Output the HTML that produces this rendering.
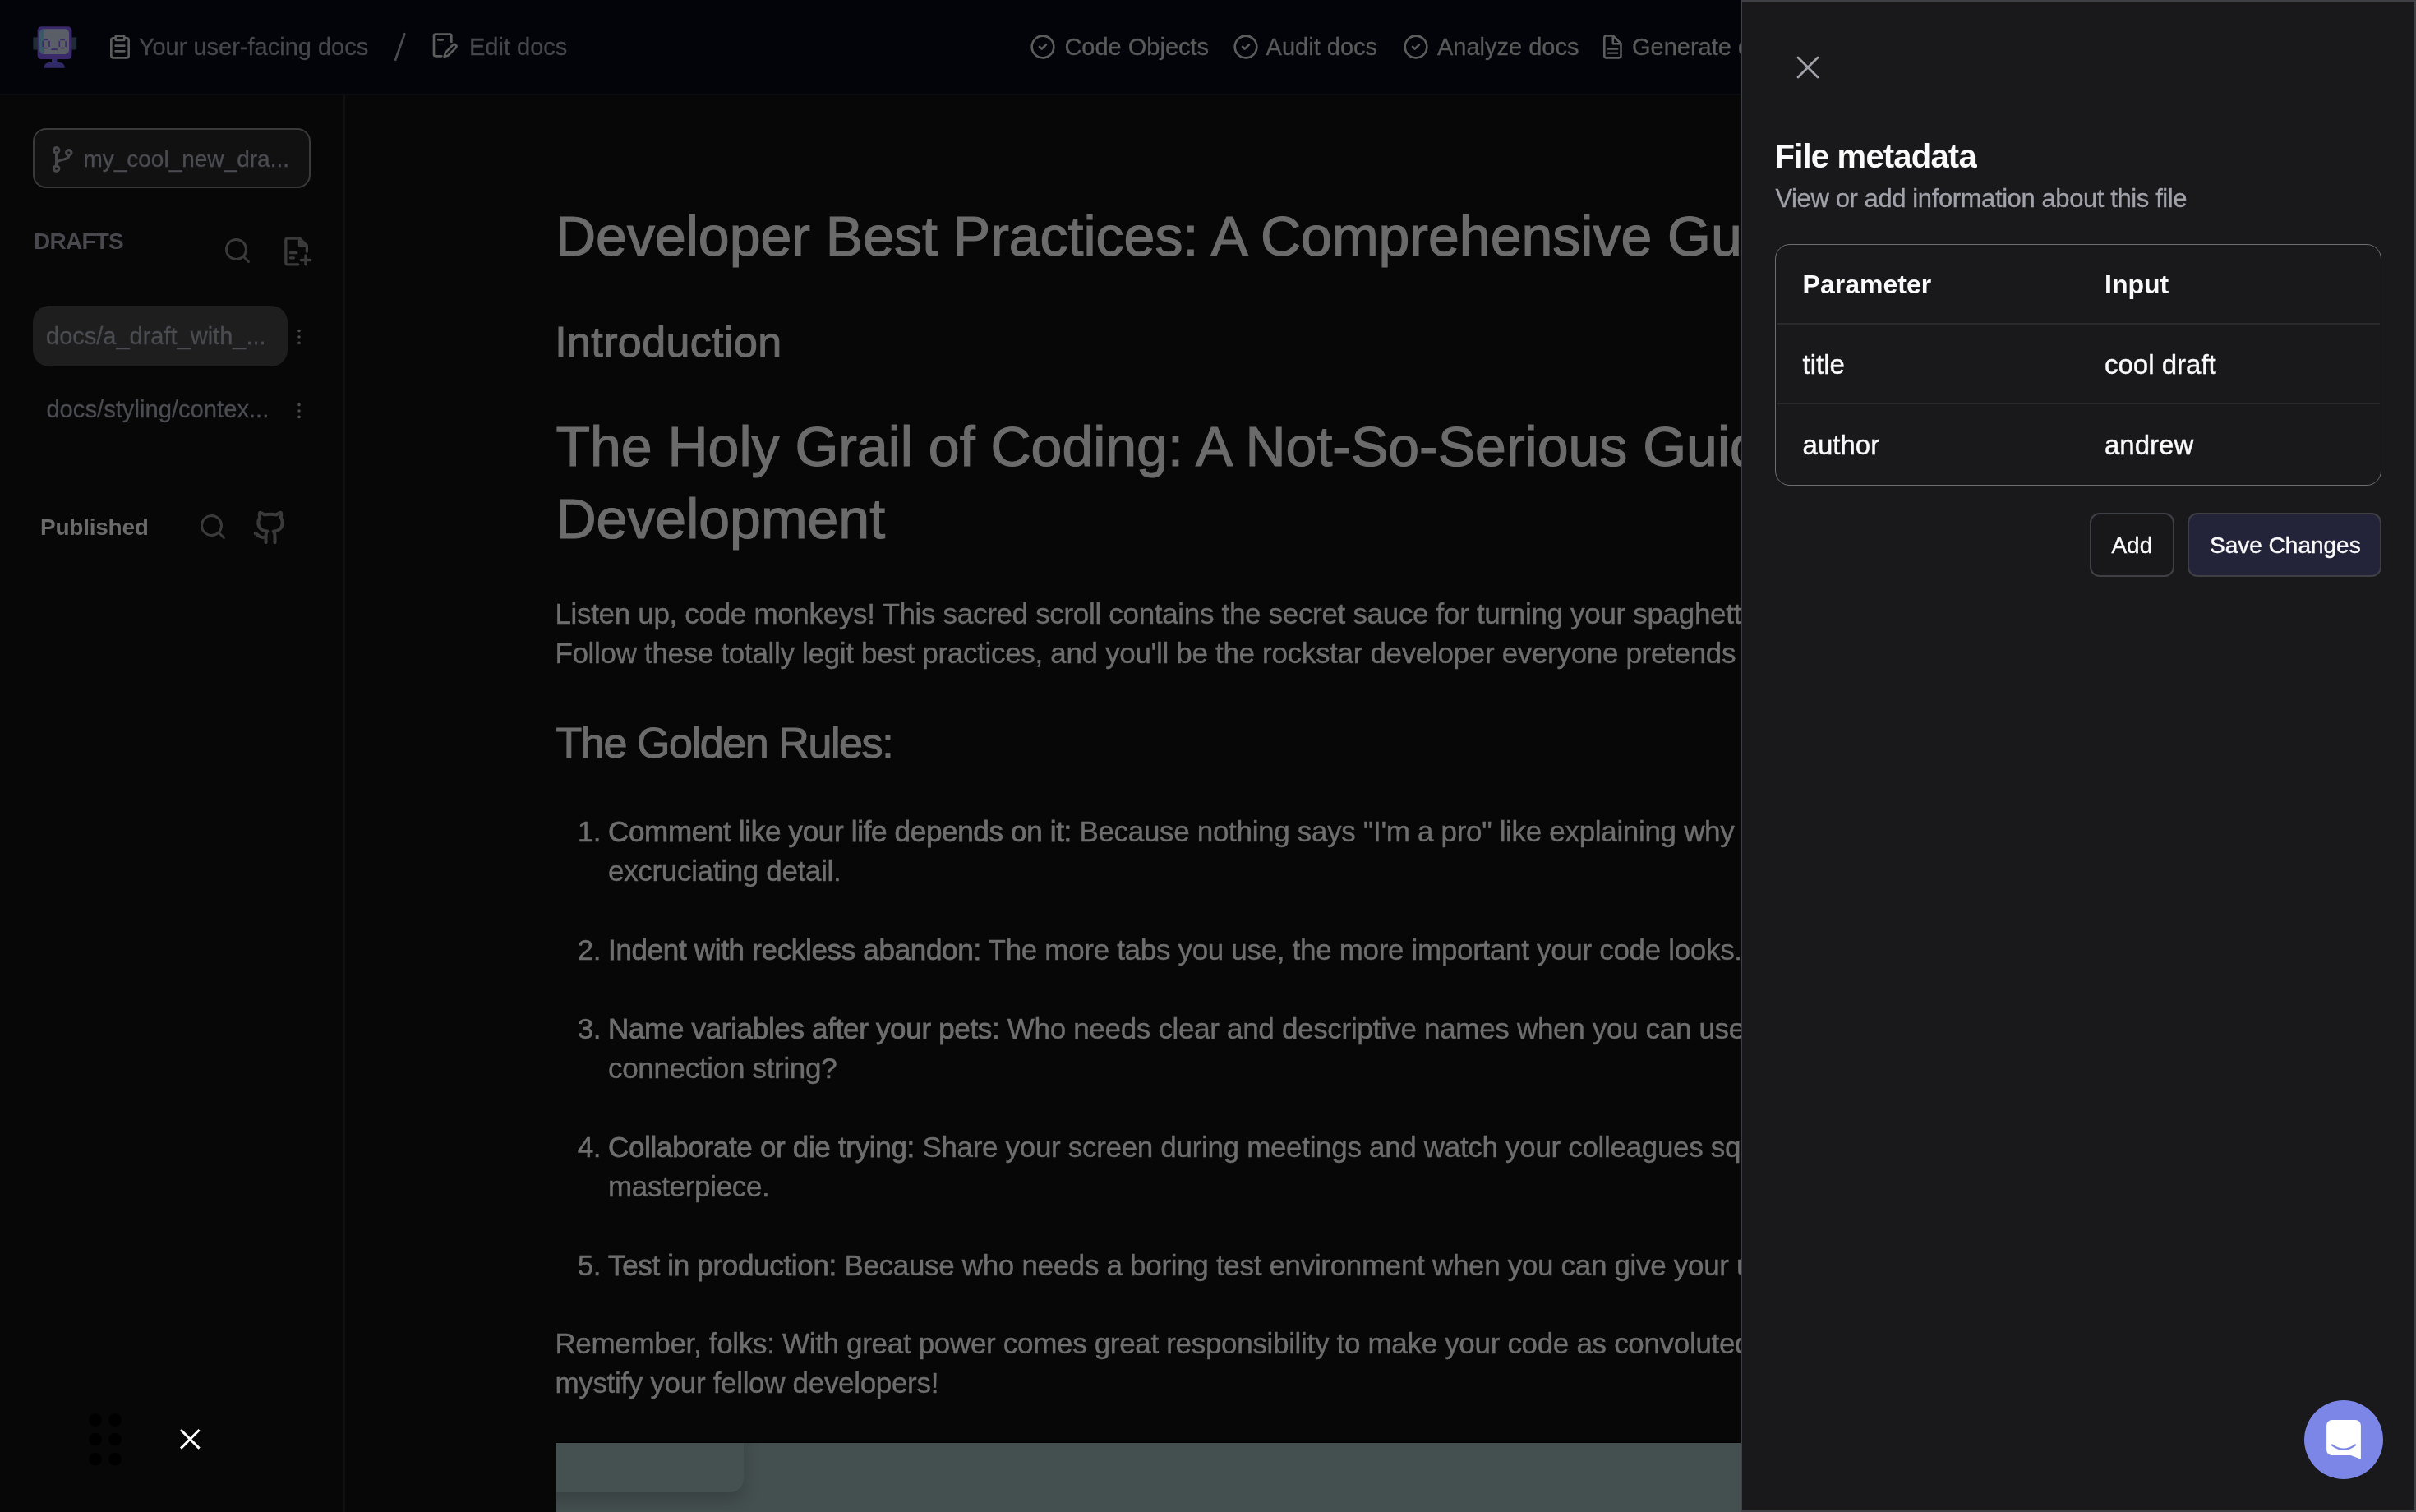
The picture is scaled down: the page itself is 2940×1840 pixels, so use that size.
<!DOCTYPE html>
<html><head><meta charset="utf-8">
<style>
html,body{margin:0;padding:0;background:#070707;overflow:hidden;}
body{width:2940px;height:1840px;}
#root{position:relative;will-change:transform;width:1470px;height:920px;zoom:2;overflow:hidden;background:#070707;font-family:"Liberation Sans",sans-serif;}
.a{position:absolute;white-space:nowrap;line-height:1;}
svg{position:absolute;overflow:visible;}
@media (max-width:2000px){body{width:1470px;height:920px;}#root{zoom:1;}}
#hdr{position:absolute;left:0;top:0;width:1470px;height:57px;background:#03040a;border-bottom:1px solid #0c0d12;}
.ht{font-size:14.5px;color:#46474c;top:21.63px;-webkit-text-stroke:0.15px #46474c;}
.hr{color:#5a5a5a;-webkit-text-stroke:0.15px #5a5a5a;}
#side{position:absolute;left:0;top:58px;width:209px;height:862px;border-right:1px solid #101010;background:#070707;}
.mc{color:#6b6b6b;}
.h1{font-size:34px;-webkit-text-stroke:0.6px #6b6b6b;}
.h2{font-size:26px;-webkit-text-stroke:0.5px #6b6b6b;}
.p{font-size:17.5px;line-height:24px;letter-spacing:-0.16px;color:#6e6e6e;-webkit-text-stroke:0.2px #6e6e6e;}
.b{-webkit-text-stroke:0.38px #6e6e6e;}
#sheet{position:absolute;left:1059px;top:0;width:409px;height:918px;background:#19191c;border:1px solid #3f3f46;}
</style></head><body><div id="root">

<!-- HEADER -->
<div id="hdr"></div>
<!-- logo -->
<svg style="left:20px;top:16px" width="27" height="26" viewBox="40 32 54 52">
  <rect x="40.3" y="45.4" width="6" height="15.1" fill="#1f2c36"/>
  <rect x="87" y="45.4" width="6.2" height="15.1" fill="#1f2c36"/>
  <path d="M53.3 82.7 Q54 76 60 76 L72 76 Q78.7 76 78.7 82.7 Z" fill="#302a68"/>
  <rect x="63" y="71" width="6.4" height="6" fill="#302a68"/>
  <rect x="45.6" y="32.2" width="41.8" height="39.9" rx="5" fill="#3a2a6a"/>
  <rect x="48.25" y="35.3" width="35.75" height="30.7" rx="5" fill="#5a5e66"/>
  <path d="M53 35.3 h0 a5 5 0 0 0 -4.75 5 v20.7 a5 5 0 0 0 4.75 5 z" fill="#3a5868"/>
  <g fill="#3a2a6a"><rect x="53.3" y="47.8" width="5.5" height="1.4"/><rect x="53.3" y="57.8" width="5.5" height="1.4"/><rect x="51.4" y="49.9" width="1.6" height="7.2"/><rect x="59.2" y="49.9" width="1.6" height="7.2"/>
  <rect x="73.4" y="47.8" width="5.5" height="1.4"/><rect x="73.4" y="57.8" width="5.5" height="1.4"/><rect x="71.5" y="49.9" width="1.6" height="7.2"/><rect x="79.3" y="49.9" width="1.6" height="7.2"/></g>
  <rect x="62.3" y="59.2" width="7.7" height="1.8" fill="#3a2a6a"/>
</svg>
<!-- clipboard icon -->
<svg style="left:65px;top:20.7px" width="16" height="16" viewBox="0 0 24 24" fill="none" stroke="#5c5c5c" stroke-width="2" stroke-linecap="round" stroke-linejoin="round">
  <rect width="8" height="4" x="8" y="2" rx="1" ry="1"/><path d="M16 4h2a2 2 0 0 1 2 2v14a2 2 0 0 1-2 2H6a2 2 0 0 1-2-2V6a2 2 0 0 1 2-2h2"/><path d="M8 11h8"/><path d="M8 16h8"/>
</svg>
<div class="a ht" style="left:84.4px;">Your user-facing docs</div>
<svg style="left:240px;top:20px" width="7" height="17" viewBox="0 0 7 17"><line x1="6.2" y1="0.6" x2="0.6" y2="16.4" stroke="#4b4c52" stroke-width="1.3" stroke-linecap="round"/></svg>
<!-- edit icon -->
<svg style="left:262px;top:19.5px" width="16" height="16" viewBox="0 0 24 24" fill="none" stroke="#5c5c5c" stroke-width="2" stroke-linecap="round" stroke-linejoin="round">
  <path d="M10 22H4.5a1.5 1.5 0 0 1-1.5-1.5V3.5A1.5 1.5 0 0 1 4.5 2h13A1.5 1.5 0 0 1 19 3.5V9"/><path d="M7 7h4"/><path d="M20.2 11.8a1.9 1.9 0 0 1 2.7 2.7L16 21.4l-3.5 1 1-3.5z"/>
</svg>
<div class="a ht" style="left:285.5px;">Edit docs</div>

<!-- right nav -->
<svg style="left:626.3px;top:20.4px" width="16" height="16" viewBox="0 0 24 24" fill="none" stroke="#5c5c5c" stroke-width="2" stroke-linecap="round" stroke-linejoin="round"><circle cx="12" cy="12" r="10"/><path d="m9 12 2 2 4-4"/></svg>
<div class="a ht hr" style="left:647.7px;">Code Objects</div>
<svg style="left:750.1px;top:20.4px" width="16" height="16" viewBox="0 0 24 24" fill="none" stroke="#5c5c5c" stroke-width="2" stroke-linecap="round" stroke-linejoin="round"><circle cx="12" cy="12" r="10"/><path d="m9 12 2 2 4-4"/></svg>
<div class="a ht hr" style="left:770.3px;">Audit docs</div>
<svg style="left:853.6px;top:20.4px" width="16" height="16" viewBox="0 0 24 24" fill="none" stroke="#5c5c5c" stroke-width="2" stroke-linecap="round" stroke-linejoin="round"><circle cx="12" cy="12" r="10"/><path d="m9 12 2 2 4-4"/></svg>
<div class="a ht hr" style="left:874.5px;">Analyze docs</div>
<svg style="left:973px;top:19px" width="16" height="18" viewBox="973 19 16 18" fill="none" stroke="#5c5c5c" stroke-width="1.3" stroke-linecap="round" stroke-linejoin="round"><path d="M981.5 21.75H977.35A1.2 1.2 0 0 0 976.15 22.95V34A1.2 1.2 0 0 0 977.35 35.2H985.05A1.2 1.2 0 0 0 986.25 34V26.5Z"/><path d="M981.4 21.9V26.6H986.1"/><path d="M978.4 29.85H984.2M978.4 32.3H984.2" stroke-width="1.1"/></svg>
<div class="a ht hr" style="left:993px;">Generate docs</div>

<!-- SIDEBAR -->
<div id="side"></div>
<div style="position:absolute;left:20px;top:78px;width:167px;height:34.5px;border:1px solid #3a3a3a;border-radius:8px;background:#111111;"></div>
<svg style="left:29px;top:87.5px" width="18" height="18" viewBox="0 0 18 18" fill="none" stroke="#47474b" stroke-width="1.6" stroke-linecap="round">
  <circle cx="5.3" cy="3.9" r="1.6"/><circle cx="5.3" cy="15.1" r="1.6"/><circle cx="12.9" cy="5.4" r="1.6"/>
  <path d="M5.3 5.5v8"/><path d="M5.3 12.2c0.3-2.2 3.2-2.4 4.6-2.7c2-0.4 2.9-1.4 3-2.5"/>
</svg>
<div class="a" style="left:50.7px;top:89.75px;font-size:14px;color:#4b4c52;-webkit-text-stroke:0.15px #4b4c52;">my_cool_new_dra...</div>

<div class="a" style="left:20.5px;top:139.75px;font-size:14px;font-weight:700;color:#48484e;letter-spacing:-0.38px;">DRAFTS</div>
<svg style="left:135.55px;top:143.5px" width="18" height="18" viewBox="0 0 24 24" fill="none" stroke="#3a3a3a" stroke-width="2" stroke-linecap="round" stroke-linejoin="round"><circle cx="11" cy="11" r="8"/><path d="m21 21-4.3-4.3"/></svg>
<svg style="left:171px;top:143px" width="20" height="20" viewBox="0 0 24 24" fill="none" stroke="#3a3a3a" stroke-width="2" stroke-linecap="round" stroke-linejoin="round">
  <path d="M12.5 21.5H4.7a1.2 1.2 0 0 1-1.2-1.2V3.7a1.2 1.2 0 0 1 1.2-1.2h8.8l5.3 5.3v4.2"/><path d="M13.5 2.5v5.3h5.3z" fill="#3a3a3a"/><path d="M6.8 13h4.5"/><path d="M6.8 16.7h2.5"/><path d="M18 15v6.5"/><path d="M14.7 18.3h6.6"/>
</svg>

<div style="position:absolute;left:20px;top:186px;width:155px;height:37px;border-radius:10px;background:#1e1e1e;"></div>
<div class="a" style="left:28px;top:197.3px;font-size:14.5px;color:#4b4c52;-webkit-text-stroke:0.15px #4b4c52;">docs/a_draft_with_...</div>
<svg style="left:180px;top:199px" width="4" height="12" viewBox="0 0 4 12" fill="#4b4c52"><circle cx="2" cy="2.3" r="0.9"/><circle cx="2" cy="6" r="0.9"/><circle cx="2" cy="9.7" r="0.9"/></svg>
<div class="a" style="left:28.2px;top:242px;font-size:14.6px;color:#4b4c52;-webkit-text-stroke:0.15px #4b4c52;">docs/styling/contex...</div>
<svg style="left:180px;top:244px" width="4" height="12" viewBox="0 0 4 12" fill="#4b4c52"><circle cx="2" cy="2.3" r="0.9"/><circle cx="2" cy="6" r="0.9"/><circle cx="2" cy="9.7" r="0.9"/></svg>

<div class="a" style="left:24.5px;top:314.15px;font-size:14px;font-weight:700;color:#6a6a6a;letter-spacing:-0.12px;">Published</div>
<svg style="left:120.55px;top:311.65px" width="18" height="18" viewBox="0 0 24 24" fill="none" stroke="#3a3a3a" stroke-width="2" stroke-linecap="round" stroke-linejoin="round"><circle cx="11" cy="11" r="8"/><path d="m21 21-4.3-4.3"/></svg>
<svg style="left:153.3px;top:310px" width="22" height="22" viewBox="0 0 24 24" fill="none" stroke="#3a3a3a" stroke-width="2.2" stroke-linecap="round" stroke-linejoin="round"><path d="M15 22v-4a4.8 4.8 0 0 0-1-3.5c3 0 6-2 6-5.5.08-1.25-.27-2.48-1-3.5.28-1.15.28-2.35 0-3.5 0 0-1 0-3 1.5-2.64-.5-5.36-.5-8 0C6 2 5 2 5 2c-.3 1.15-.3 2.35 0 3.5A5.403 5.403 0 0 0 4 9c0 3.5 3 5.5 6 5.5-.39.49-.68 1.05-.85 1.65-.17.6-.22 1.23-.15 1.85v4"/><path d="M9 18c-4.51 2-5-2-7-2"/></svg>

<!-- MAIN CONTENT -->
<div class="a mc h1" style="left:338px;top:126.7px;">Developer Best Practices: A Comprehensive Guide</div>
<div class="a mc h2" style="left:337.6px;top:195.0px;letter-spacing:0.19px;">Introduction</div>
<div class="a mc h1" style="left:338.2px;top:249.6px;line-height:44px;">The Holy Grail of Coding: A Not-So-Serious Guide to<br>Development</div>
<div class="a mc p" style="left:337.7px;top:361.44px;">Listen up, code monkeys! This sacred scroll contains the secret sauce for turning your spaghetti code<br>Follow these totally legit best practices, and you'll be the rockstar developer everyone pretends to be.</div>
<div class="a mc h2" style="left:338.25px;top:438.9px;letter-spacing:-0.7px;">The Golden Rules:</div>

<div class="a mc p" style="left:351.35px;top:493.9px;">1.</div>
<div class="a mc p" style="left:370px;top:493.9px;"><span class="b">Comment like your life depends on it:</span> Because nothing says "I'm a pro" like explaining why your code<br>excruciating detail.</div>
<div class="a mc p" style="left:351.35px;top:565.8px;">2.</div>
<div class="a mc p" style="left:370px;top:565.8px;"><span class="b">Indent with reckless abandon:</span> The more tabs you use, the more important your code looks.</div>
<div class="a mc p" style="left:351.35px;top:613.8px;">3.</div>
<div class="a mc p" style="left:370px;top:613.8px;"><span class="b">Name variables after your pets:</span> Who needs clear and descriptive names when you can use Fluffy<br>connection string?</div>
<div class="a mc p" style="left:351.35px;top:686.1px;">4.</div>
<div class="a mc p" style="left:370px;top:686.1px;"><span class="b">Collaborate or die trying:</span> Share your screen during meetings and watch your colleagues squirm<br>masterpiece.</div>
<div class="a mc p" style="left:351.35px;top:758.1px;">5.</div>
<div class="a mc p" style="left:370px;top:758.1px;"><span class="b">Test in production:</span> Because who needs a boring test environment when you can give your users</div>
<div class="a mc p" style="left:337.7px;top:805.6px;">Remember, folks: With great power comes great responsibility to make your code as convoluted as<br>mystify your fellow developers!</div>

<div style="position:absolute;left:338px;top:877.5px;width:800px;height:0.5px;background:#000;"></div>
<div style="position:absolute;left:338px;top:878px;width:800px;height:42px;background:#444f4f;overflow:hidden;">
<div style="position:absolute;left:-10px;top:-10px;width:124.5px;height:40px;border-radius:0 0 8px 0;background:#455050;box-shadow:0 5px 10px rgba(0,0,0,0.18);"></div></div>

<!-- bottom-left toolbar -->
<svg style="left:50px;top:856px" width="30" height="40" viewBox="0 0 30 40" fill="#000"><circle cx="8" cy="8" r="3.9"/><circle cx="20" cy="8" r="3.9"/><circle cx="8" cy="19.75" r="3.9"/><circle cx="20" cy="19.75" r="3.9"/><circle cx="8" cy="31.85" r="3.9"/><circle cx="20" cy="31.85" r="3.9"/></svg>
<svg style="left:109.7px;top:869.6px" width="12.3" height="12.3" viewBox="0 0 12.3 12.3" stroke="#fff" stroke-width="1.5" stroke-linecap="butt"><path d="M0.5 0.5L11.8 11.8M11.8 0.5L0.5 11.8"/></svg>

<!-- SHEET -->
<div id="sheet"></div>
<svg style="left:1093.5px;top:34.5px" width="13" height="13" viewBox="0 0 13 13" stroke="#a1a1aa" stroke-width="1.4" stroke-linecap="round"><path d="M0.5 0.5L12.5 12.5M12.5 0.5L0.5 12.5"/></svg>
<div class="a" style="left:1079.8px;top:85.07px;font-size:20px;font-weight:700;color:#fafafa;letter-spacing:-0.4px;">File metadata</div>
<div class="a" style="left:1080.2px;top:112.88px;font-size:15.5px;color:#a1a1aa;letter-spacing:-0.2px;-webkit-text-stroke:0.15px #a1a1aa;">View or add information about this file</div>

<div style="position:absolute;left:1080.2px;top:148.25px;width:367.6px;height:146.4px;border:0.5px solid #6e6e72;border-radius:9px;"></div>
<div style="position:absolute;left:1081px;top:196.5px;width:367px;height:1px;background:#2a2a2e;"></div>
<div style="position:absolute;left:1081px;top:245px;width:367px;height:1px;background:#2a2a2e;"></div>
<div class="a" style="left:1096.8px;top:164.86px;font-size:16px;font-weight:700;color:#fafafa;">Parameter</div>
<div class="a" style="left:1280.5px;top:164.86px;font-size:16px;font-weight:700;color:#fafafa;">Input</div>
<div class="a" style="left:1096.8px;top:213.4px;font-size:16.5px;color:#fafafa;-webkit-text-stroke:0.2px #fafafa;">title</div>
<div class="a" style="left:1280.5px;top:213.4px;font-size:16.5px;color:#fafafa;-webkit-text-stroke:0.2px #fafafa;">cool draft</div>
<div class="a" style="left:1096.8px;top:262.6px;font-size:16.5px;color:#fafafa;-webkit-text-stroke:0.2px #fafafa;">author</div>
<div class="a" style="left:1280.5px;top:262.6px;font-size:16.5px;color:#fafafa;-webkit-text-stroke:0.2px #fafafa;">andrew</div>

<div style="position:absolute;left:1271.5px;top:312px;width:49.5px;height:37px;border:1px solid #3f3f46;border-radius:6px;background:#18181b;"></div>
<div class="a" style="left:1284.7px;top:325.15px;font-size:14px;color:#fafafa;-webkit-text-stroke:0.2px #fafafa;">Add</div>
<div style="position:absolute;left:1331px;top:312px;width:116px;height:37px;border:1px solid #3f3f46;border-radius:6px;background:#23243a;"></div>
<div class="a" style="left:1344.5px;top:325.15px;font-size:14px;color:#fafafa;-webkit-text-stroke:0.2px #fafafa;">Save Changes</div>

<!-- intercom launcher -->
<div style="position:absolute;left:1402px;top:852px;width:48px;height:48px;border-radius:50%;background:#7b86e6;"></div>
<svg style="left:1414px;top:863px" width="24" height="26" viewBox="1414 863 24 26"><path d="M1418.85 864H1433.15A3.3 3.3 0 0 1 1436.45 867.3V887.85L1430.3 885.5H1418.85A3.3 3.3 0 0 1 1415.55 882.2V867.3A3.3 3.3 0 0 1 1418.85 864Z" fill="#fff"/><path d="M1418.9 879.2Q1426 884.6 1433 879.2" fill="none" stroke="#7b86e6" stroke-width="1.2" stroke-linecap="round"/></svg>

</div></body></html>
